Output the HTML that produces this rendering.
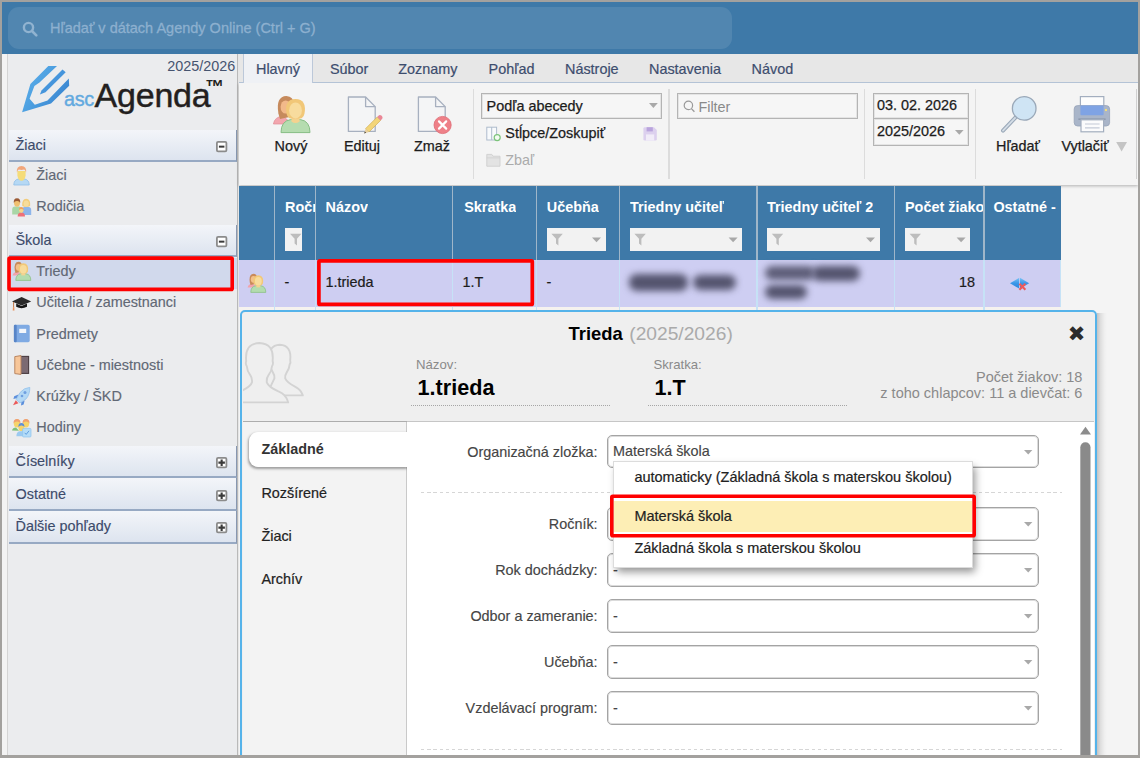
<!DOCTYPE html>
<html lang="sk">
<head>
<meta charset="utf-8">
<title>ascAgenda - Triedy</title>
<style>
html,body{margin:0;padding:0;}
body{width:1140px;height:758px;overflow:hidden;background:#f4f4f4;font-family:"Liberation Sans",Arial,sans-serif;font-size:14.4px;color:#222;position:relative;}
.abs{position:absolute;}
.t{position:absolute;white-space:nowrap;line-height:20px;height:20px;}
svg{position:absolute;overflow:visible;}
/* outer frame */
.fr{position:absolute;background:#a3a19e;z-index:50;}
/* top bar */
#topbar{position:absolute;left:0;top:0;width:1140px;height:53.5px;background:#3e79a8;}
#pill{position:absolute;left:8px;top:7px;width:724px;height:42px;border-radius:11px;background:#5186b0;}
#pill .t{left:42px;top:11.3px;color:#8db0cf;font-size:14.5px;-webkit-text-stroke:0.3px #8db0cf;}
/* sidebar */
#sidegap{position:absolute;left:0;top:53.5px;width:8px;height:710px;background:#f3f3f3;border-right:1px solid #d4d4d4;box-sizing:border-box;}
#sidebar{position:absolute;left:8px;top:53.5px;width:229px;height:710px;background:#ebecee;}
#sideedge{position:absolute;left:237px;top:53.5px;width:2px;height:710px;background:linear-gradient(90deg,#b9b9b9 0,#b9b9b9 50%,#e6e6e6 50%);}
.sh{position:absolute;left:9px;width:227px;height:30.7px;background:linear-gradient(#f3f5f9,#dde4ef);border-bottom:2px solid #97a9c3;border-right:1px solid #8797b1;}
.sh .t{left:6.5px;top:5.5px;color:#3d4b6b;-webkit-text-stroke:0.15px #3d4b6b;}
.sh .box{position:absolute;left:206.6px;top:11.5px;width:9.6px;height:9px;border:1.3px solid #858585;background:#fff;border-radius:1.5px;box-shadow:0 0 0 0.6px rgba(120,120,120,.35);}
.sh .box:before{content:"";position:absolute;left:2px;right:2px;top:3.6px;height:1.9px;background:#484848;}
.sh .box.plus:after{content:"";position:absolute;top:1.6px;bottom:1.6px;left:3.9px;width:1.9px;background:#484848;}
.si{position:absolute;left:8px;width:229px;height:31px;}
.si .t{left:28.3px;top:2.8px;color:#616875;-webkit-text-stroke:0.15px #616875;}
.si.sel{background:#d1d9ec;}
</style>
</head>
<body>
<div id="topbar">
  <div id="pill">
    <svg style="left:14px;top:14px" width="16" height="16" viewBox="0 0 16 16"><circle cx="6.5" cy="6.5" r="4.6" fill="none" stroke="#91b3d0" stroke-width="2.4"/><path d="M10 10 L14.3 14.3" stroke="#91b3d0" stroke-width="2.6" stroke-linecap="round"/></svg>
    <div class="t">Hľadať v dátach Agendy Online (Ctrl + G)</div>
  </div>
</div>
<div id="sidegap"></div>
<div id="sidebar"></div>
<div id="sideedge"></div>
<!--SIDEBAR-->
<!-- logo -->
<div class="t" style="left:160px;top:55.6px;width:75.2px;text-align:right;color:#46546f;">2025/2026</div>
<svg style="left:0;top:0" width="120" height="120" viewBox="0 0 120 120">
  <defs><linearGradient id="lg1" x1="0" y1="0" x2="1" y2="0.6"><stop offset="0" stop-color="#5fb2ec"/><stop offset="0.45" stop-color="#4fa2e2"/><stop offset="1" stop-color="#3985d0"/></linearGradient></defs>
  <path d="M22.1 112.2 L30.4 84.1 L48.3 65.9 L57 65.9 L39.5 82.5 L34.4 86.1 L29.6 98.8 L34.8 104.7 L47.5 100.4 L68.8 78.6 L69.2 85.7 L51 103.5 Z" fill="url(#lg1)"/>
  <path d="M62.5 69.5 L65.7 72.3 L45.5 92.2 L39.9 94.4 L41.5 90.5 Z" fill="#4595dc"/>
</svg>
<div class="t" style="left:64px;top:83.6px;font-size:19.8px;color:#62a9df;line-height:30px;height:30px;letter-spacing:-0.35px;-webkit-text-stroke:0.4px #62a9df">asc</div>
<div class="t" style="left:94.5px;top:72.7px;font-size:34px;color:#231f20;line-height:44px;height:44px;letter-spacing:-0.2px;-webkit-text-stroke:0.45px #231f20">Agenda</div>
<div class="t" id="tm" style="left:205.3px;top:76.6px;font-size:18.8px;font-weight:bold;color:#231f20;line-height:20px;height:20px;">™</div>

<div class="sh" style="top:129.8px"><div class="t">Žiaci</div><svg style="left:206.5px;top:11.5px" width="12" height="12" viewBox="0 0 12 12"><rect x="0.9" y="0.9" width="9.5" height="9.5" rx="1.2" fill="#fff" stroke="#8b8b8b" stroke-width="1.8"/><path d="M2.9 5.65 L8.4 5.65" stroke="#3a3a3a" stroke-width="2"/></svg></div>
<div class="si" style="top:162.4px"><div class="t">Žiaci</div></div>
<div class="si" style="top:193.6px"><div class="t">Rodičia</div></div>
<div class="sh" style="top:224.8px"><div class="t">Škola</div><svg style="left:206.5px;top:11.5px" width="12" height="12" viewBox="0 0 12 12"><rect x="0.9" y="0.9" width="9.5" height="9.5" rx="1.2" fill="#fff" stroke="#8b8b8b" stroke-width="1.8"/><path d="M2.9 5.65 L8.4 5.65" stroke="#3a3a3a" stroke-width="2"/></svg></div>
<div class="si sel" style="top:258.4px"><div class="t">Triedy</div></div>
<div class="si" style="top:289.6px"><div class="t">Učitelia / zamestnanci</div></div>
<div class="si" style="top:320.8px"><div class="t">Predmety</div></div>
<div class="si" style="top:352px"><div class="t">Učebne - miestnosti</div></div>
<div class="si" style="top:383.2px"><div class="t">Krúžky / ŠKD</div></div>
<div class="si" style="top:414.4px"><div class="t">Hodiny</div></div>
<div class="sh" style="top:445.5px"><div class="t">Číselníky</div><svg style="left:206.5px;top:11.5px" width="12" height="12" viewBox="0 0 12 12"><rect x="0.9" y="0.9" width="9.5" height="9.5" rx="1.2" fill="#fff" stroke="#8b8b8b" stroke-width="1.8"/><path d="M2.4 5.65 L8.9 5.65 M5.65 2.4 L5.65 8.9" stroke="#3a3a3a" stroke-width="2.1"/></svg></div>
<div class="sh" style="top:478.2px"><div class="t">Ostatné</div><svg style="left:206.5px;top:11.5px" width="12" height="12" viewBox="0 0 12 12"><rect x="0.9" y="0.9" width="9.5" height="9.5" rx="1.2" fill="#fff" stroke="#8b8b8b" stroke-width="1.8"/><path d="M2.4 5.65 L8.9 5.65 M5.65 2.4 L5.65 8.9" stroke="#3a3a3a" stroke-width="2.1"/></svg></div>
<div class="sh" style="top:510.9px"><div class="t">Ďalšie pohľady</div><svg style="left:206.5px;top:11.5px" width="12" height="12" viewBox="0 0 12 12"><rect x="0.9" y="0.9" width="9.5" height="9.5" rx="1.2" fill="#fff" stroke="#8b8b8b" stroke-width="1.8"/><path d="M2.4 5.65 L8.9 5.65 M5.65 2.4 L5.65 8.9" stroke="#3a3a3a" stroke-width="2.1"/></svg></div>
<svg style="left:0;top:0;z-index:20" width="1140" height="758"><rect x="9" y="258.1" width="223.2" height="31.3" rx="1" fill="none" stroke="#ff0000" stroke-width="3.6"/></svg>
<svg style="left:0;top:0;z-index:5" width="240" height="450" viewBox="0 0 240 450">
  <!-- Ziaci person -->
  <g>
    <path d="M13.8 185 Q13.8 180 18.2 179 L24.8 179 Q29.2 180 29.2 185 Z" fill="#b5d8f4" stroke="#8fbfe8" stroke-width="0.8"/>
    <path d="M17.4 171 L17.4 175.4 Q18.2 180.6 21.5 180.8 Q24.8 180.6 25.6 175.4 L25.6 171 Z" fill="#f5dc78"/>
    <path d="M16.9 172.6 Q16.2 166 21.5 165.9 Q26.8 166 26.1 172.6 Q25.4 170 24.2 169.6 Q21.5 170.3 18.8 169.6 Q17.6 170 16.9 172.6 Z" fill="#f2a67a"/>
  </g>
  <!-- Rodicia family -->
  <g>
    <path d="M12.2 214.5 L12.2 209.5 Q12.2 206.8 15 206.6 L19.2 206.6 Q21.6 206.8 21.6 209.5 L21.6 214.5 Z" fill="#a9d6a6"/>
    <ellipse cx="17" cy="203" rx="3" ry="3.7" fill="#f0c070"/>
    <path d="M13.8 203 Q13.3 198.3 17 198.2 Q20.7 198.3 20.2 203 Q19.5 200.8 17 200.9 Q14.5 200.8 13.8 203Z" fill="#9a5a34"/>
    <path d="M22 215 L22 210 Q22 207.3 24.6 207 L28.6 207 Q31.2 207.3 31.2 210 L31.2 215 Z" fill="#8db5ea"/>
    <path d="M22.3 206 Q21.6 199 26.2 198.8 Q30.8 199 30.1 206 Q28.5 207 26.2 207 Q23.9 207 22.3 206Z" fill="#f2cc7c"/>
    <ellipse cx="26.2" cy="203.6" rx="2.6" ry="3.2" fill="#f7dc9a"/>
    <path d="M17.6 216.6 Q17.6 212.6 21.3 212.6 Q25 212.6 25 216.6 Z" fill="#ee6f78"/>
    <ellipse cx="21.3" cy="210.2" rx="2.2" ry="2.6" fill="#f5d58a"/>
    <path d="M19 210 Q18.8 207.2 21.3 207.1 Q23.8 207.2 23.6 210 Q22.5 208.8 21.3 208.9 Q20.1 208.8 19 210Z" fill="#f0a060"/>
  </g>
  <!-- Triedy two persons -->
  <g>
    <path d="M12.6 275.5 Q13.4 272 17.6 271.6 L22 275.5 Z" fill="#f2a3ac"/>
    <path d="M14.8 270.5 Q13.6 262 18.6 261.8 Q22 262 22 266 L20 272 L15.6 273 Z" fill="#c98a5a"/>
    <ellipse cx="18.4" cy="267.3" rx="2.6" ry="3.4" fill="#f3c08a"/>
    <path d="M15.8 280.4 Q15.8 274.6 20.6 273.8 L26 273.8 Q30.8 274.6 30.8 280.4 Z" fill="#b3dcae" stroke="#8cc088" stroke-width="0.8"/>
    <rect x="21.3" y="271" width="4" height="4.4" fill="#f4d391"/>
    <path d="M18.7 271.5 Q17.3 263.4 23.3 263.2 Q29.3 263.4 27.9 271.5 Q27 273.4 25.5 273.4 L21.1 273.4 Q19.6 273.4 18.7 271.5Z" fill="#f2c878"/>
    <ellipse cx="23.3" cy="269.2" rx="3.4" ry="4.2" fill="#f8dc9c"/>
  </g>
  <!-- Ucitelia cap -->
  <g>
    <path d="M12 301.4 L21.6 297 L31.2 301.4 L21.6 305.6 Z" fill="#2a2a2a"/>
    <path d="M16.2 303.6 L16.2 306.8 Q21.6 309.6 27 306.8 L27 303.6 L21.6 306 Z" fill="#161616"/>
    <path d="M13.6 302 L13.6 307.6" stroke="#c07848" stroke-width="1"/>
    <path d="M12.9 307.2 L14.3 307.2 L14.5 310.4 L12.7 310.4 Z" fill="#e8905a"/>
  </g>
  <!-- Predmety book -->
  <g>
    <rect x="13.9" y="324.8" width="15.8" height="17.4" rx="1.6" fill="#7faae3"/>
    <rect x="13.9" y="324.8" width="2.8" height="17.4" rx="1" fill="#5885c7"/>
    <rect x="19.2" y="328.8" width="7" height="4.2" fill="#f3f6fb"/>
  </g>
  <!-- Ucebne door -->
  <g>
    <rect x="20.6" y="356.4" width="8" height="17" fill="#7b6a72" stroke="#4a3c42" stroke-width="1.1"/>
    <path d="M14.8 356.6 L21 355.6 L21 374.4 L14.8 373.6 Z" fill="#f7c699" stroke="#b98662" stroke-width="1"/>
  </g>
  <!-- Kruzky rocket -->
  <g>
    <path d="M29.8 387.4 Q24 387.6 20 392.6 L16.2 399.4 L19.8 403 L26 399 Q30 394.4 29.8 387.4Z" fill="#b3d8f5" stroke="#8cbdeb" stroke-width="0.7"/>
    <circle cx="25" cy="392.4" r="1.5" fill="#6f9fe0"/>
    <circle cx="22" cy="396" r="1.3" fill="#6f9fe0"/>
    <path d="M18.4 394.4 L14.2 396.2 L13.4 399 L16.6 398.2Z" fill="#5b8fdc"/>
    <path d="M24.6 400.4 L23.6 404.6 L21 405.4 L21.4 402.2Z" fill="#5b8fdc"/>
    <path d="M15.8 400.2 L13 405.2 L18.4 403.2Z" fill="#ea5a5a"/>
  </g>
  <!-- Hodiny -->
  <g>
    <path d="M12 430.6 Q12.6 427.8 16 427.6 L19 430.8 Z" fill="#7fc07a"/>
    <ellipse cx="17" cy="423.6" rx="3.2" ry="4" fill="#f6d46a"/>
    <path d="M13.6 423.4 Q13.2 419 17 418.9 Q20.8 419 20.4 423.4 Q19.4 421.4 17 421.5 Q14.6 421.4 13.6 423.4Z" fill="#f0a070"/>
    <ellipse cx="26" cy="423.6" rx="3.2" ry="4" fill="#f6d46a"/>
    <path d="M22.6 423.4 Q22.2 419 26 418.9 Q29.8 419 29.4 423.4 Q28.4 421.4 26 421.5 Q23.6 421.4 22.6 423.4Z" fill="#f0a070"/>
    <ellipse cx="21.4" cy="427.6" rx="3" ry="3.6" fill="#f6d46a"/>
    <path d="M18.4 427 Q18.2 423.2 21.4 423.1 Q24.6 423.2 24.4 427 Q23.4 425.4 21.4 425.5 Q19.4 425.4 18.4 427Z" fill="#5f8fd6"/>
    <path d="M16.4 436.2 Q16.4 431.6 19.6 431.2 L23 431.2 L23 436.2Z" fill="#9ccaf0"/>
    <rect x="22.6" y="428.4" width="8.4" height="8.6" rx="1" fill="#b5dcf7" stroke="#8ec4ee" stroke-width="0.7"/>
    <path d="M24.6 432.8 L26.2 434.4 L29 430.8" fill="none" stroke="#5f9fe0" stroke-width="1"/>
  </g>
</svg>
<!--/SIDEBAR-->
<!--MAIN-->
<style>
#tabs{position:absolute;left:239px;top:53.5px;width:899px;height:29px;background:#e7e7e7;border-bottom:1.4px solid #b4c3d6;box-sizing:border-box;}
#tabs .t{top:6.3px;color:#3d4d6e;}
#tabact{position:absolute;left:243px;top:53.5px;width:70px;height:29.6px;background:#eff1f5;border:1px solid #bcc8d9;border-bottom:none;border-top:none;box-sizing:border-box;}
#toolbar{position:absolute;left:239px;top:82.6px;width:899px;height:102.6px;background:#f4f4f4;box-shadow:0 1px 3px rgba(0,0,0,.28);}
.vsep{position:absolute;top:89px;width:1.3px;height:90px;background:#dcdcdc;}
.tl{position:absolute;white-space:nowrap;line-height:20px;height:20px;top:136.4px;color:#1c1c1c;text-align:center;-webkit-text-stroke:0.25px #1c1c1c;}
.tbox{position:absolute;border:1px solid #b4b4b4;background:#f6f6f6;box-sizing:border-box;box-shadow:inset 0 0 0 1px rgba(0,0,0,.07);}
</style>
<div id="toolbar"></div>
<div id="tabs">
</div>
<div id="tabact"></div>
<div class="t" style="left:256px;top:59.4px;color:#3d4d6e;-webkit-text-stroke:0.2px #3d4d6e">Hlavný</div>
<div class="t" style="left:330px;top:59.4px;color:#3d4d6e;-webkit-text-stroke:0.2px #3d4d6e">Súbor</div>
<div class="t" style="left:398.3px;top:59.4px;color:#3d4d6e;-webkit-text-stroke:0.2px #3d4d6e">Zoznamy</div>
<div class="t" style="left:488.6px;top:59.4px;color:#3d4d6e;-webkit-text-stroke:0.2px #3d4d6e">Pohľad</div>
<div class="t" style="left:565px;top:59.4px;color:#3d4d6e;-webkit-text-stroke:0.2px #3d4d6e">Nástroje</div>
<div class="t" style="left:649px;top:59.4px;color:#3d4d6e;-webkit-text-stroke:0.2px #3d4d6e">Nastavenia</div>
<div class="t" style="left:751.6px;top:59.4px;color:#3d4d6e;-webkit-text-stroke:0.2px #3d4d6e">Návod</div>

<div class="vsep" style="left:472.6px"></div>
<div class="vsep" style="left:668.4px"></div>
<div class="vsep" style="left:863.6px"></div>
<div class="vsep" style="left:974.6px"></div>
<div class="vsep" style="left:1135.6px;background:#d0d0d0"></div>

<div class="tl" style="left:261px;width:60px">Nový</div>
<div class="tl" style="left:332px;width:60px">Edituj</div>
<div class="tl" style="left:402px;width:60px">Zmaž</div>
<div class="tl" style="left:988px;width:60px">Hľadať</div>
<div class="tl" style="left:1055px;width:60px">Vytlačiť</div>
<svg style="left:1115.6px;top:141.8px" width="12" height="10" viewBox="0 0 12 10"><path d="M0.2 0 L11 0 L5.6 9.4 Z" fill="#c4c4c4"/></svg>

<div class="tbox" style="left:481px;top:92.8px;width:181.4px;height:26.2px"></div>
<div class="t" style="left:486.6px;top:95.6px;color:#1c1c1c;-webkit-text-stroke:0.25px #1c1c1c">Podľa abecedy</div>
<svg style="left:648.6px;top:103.4px" width="9" height="5" viewBox="0 0 9 5"><path d="M0 0 L8.8 0 L4.4 4.9 Z" fill="#a9a9a9"/></svg>
<div class="t" style="left:505.3px;top:123.4px;color:#1c1c1c;-webkit-text-stroke:0.25px #1c1c1c">Stĺpce/Zoskupiť</div>
<div class="t" style="left:505.3px;top:150px;color:#ababab">Zbaľ</div>

<div class="tbox" style="left:677px;top:92.8px;width:181.4px;height:26.2px"></div>
<svg style="left:683.2px;top:99.8px" width="13" height="13" viewBox="0 0 13 13"><circle cx="5.4" cy="5.4" r="4.2" fill="none" stroke="#9a9a9a" stroke-width="1.2"/><path d="M8.4 8.6 L11.4 11.8" stroke="#9a9a9a" stroke-width="1.3"/></svg>
<div class="t" style="left:698.4px;top:96.6px;color:#8a8a8a">Filter</div>

<div class="tbox" style="left:872.6px;top:92.8px;width:96.6px;height:26.4px"></div>
<div class="tbox" style="left:872.6px;top:118px;width:96.6px;height:27.8px"></div>
<div class="t" style="left:877px;top:95px;color:#1c1c1c;-webkit-text-stroke:0.25px #1c1c1c">03. 02. 2026</div>
<div class="t" style="left:877px;top:120.6px;color:#1c1c1c;-webkit-text-stroke:0.25px #1c1c1c">2025/2026</div>
<svg style="left:955px;top:129.6px" width="9" height="5" viewBox="0 0 9 5"><path d="M0 0 L8.6 0 L4.3 4.8 Z" fill="#a9a9a9"/></svg>
<svg style="left:0;top:0;z-index:6" width="1140" height="190" viewBox="0 0 1140 190">
  <!-- Novy: two people -->
  <g>
    <path d="M273.4 124 Q274.6 116.8 283 116 L292 124 Z" fill="#f3a6ae" stroke="#e08c96" stroke-width="0.7"/>
    <path d="M278.4 113.5 Q275.6 96.4 286.4 96 Q293.6 96.4 293.6 104 L289.6 117 L280 119 Z" fill="#c68a5c"/>
    <ellipse cx="285.6" cy="107" rx="5" ry="6.6" fill="#f2b98a"/>
    <path d="M281 132.6 Q281 121 290.6 119.6 L300.4 119.6 Q310 121 310 132.6 Z" fill="#b5dcb0" stroke="#86bd84" stroke-width="1"/>
    <path d="M291.4 113 L291.4 121.4 Q295.5 124.6 299.6 121.4 L299.6 113 Z" fill="#f4d28f"/>
    <path d="M286.6 114 Q283.8 99.4 295.5 99 Q307.2 99.4 304.4 114 Q303 118.4 300.2 118.6 L290.8 118.6 Q288 118.4 286.6 114Z" fill="#f1c778"/>
    <ellipse cx="295.5" cy="110.4" rx="6.4" ry="8" fill="#f8dc9e"/>
  </g>
  <!-- Edituj: doc + pencil -->
  <g>
    <path d="M348.4 97 L365.6 97 L375.2 106.6 L375.2 131.4 L348.4 131.4 Z" fill="#f4f5f6" stroke="#a7b0bf" stroke-width="1.3" stroke-linejoin="round"/>
    <path d="M365.6 97 L365.6 106.6 L375.2 106.6" fill="none" stroke="#a7b0bf" stroke-width="1.3" stroke-linejoin="round"/>
    <path d="M365.6 128.6 L377.2 117 L380.6 120.4 L369 132 Z" fill="#f3d578" stroke="#c9a84e" stroke-width="0.6"/>
    <path d="M377.2 117 L379 115.2 Q380.2 114.4 381.4 115.6 L382.2 116.6 Q383 117.8 382.2 118.8 L380.6 120.4 Z" fill="#ea8796"/>
    <path d="M365.6 128.6 L364.2 133.4 L369 132 Z" fill="#e8d0a0"/>
    <path d="M364.8 131.4 L364.2 133.4 L366.2 132.8 Z" fill="#444"/>
  </g>
  <!-- Zmaz: doc + red x -->
  <g>
    <path d="M418.4 97 L435.6 97 L445.2 106.6 L445.2 131.4 L418.4 131.4 Z" fill="#f4f5f6" stroke="#a7b0bf" stroke-width="1.3" stroke-linejoin="round"/>
    <path d="M435.6 97 L435.6 106.6 L445.2 106.6" fill="none" stroke="#a7b0bf" stroke-width="1.3" stroke-linejoin="round"/>
    <circle cx="442.6" cy="125" r="8.6" fill="#ee8088" stroke="#de6a74" stroke-width="0.8"/>
    <path d="M439 121.4 L446.2 128.6 M446.2 121.4 L439 128.6" stroke="#fff" stroke-width="2.2" stroke-linecap="round"/>
  </g>
  <!-- columns icon -->
  <g>
    <rect x="486.8" y="127.2" width="9.8" height="12.8" fill="#f8fafc" stroke="#aebccc" stroke-width="1"/>
    <path d="M491.7 127.2 L491.7 140" stroke="#aebccc" stroke-width="1"/>
    <circle cx="497.2" cy="137.6" r="3" fill="#f4fbf2" stroke="#7cc47a" stroke-width="1.2"/>
  </g>
  <!-- save icon -->
  <g>
    <path d="M643.4 128.6 Q643.4 127.2 644.8 127.2 L654 127.2 L656.8 130 L656.8 139.2 Q656.8 140.6 655.4 140.6 L644.8 140.6 Q643.4 140.6 643.4 139.2 Z" fill="#dcd0ee"/>
    <rect x="646.6" y="127.2" width="6.2" height="4.2" fill="#b9a4dc"/>
    <rect x="646" y="134.4" width="8.2" height="6.2" fill="#f1ecf8"/>
  </g>
  <!-- folder icon -->
  <g>
    <path d="M486.8 154.4 L491.8 154.4 L493 156.2 L500 156.2 L500 166.2 L486.8 166.2 Z" fill="#e3e3e3" stroke="#cfcfcf" stroke-width="0.9"/>
    <path d="M486.8 157.8 L500 157.8" stroke="#d0d0d0" stroke-width="0.8"/>
  </g>
  <!-- Hladat magnifier -->
  <g>
    <path d="M1015.6 117.4 L1003 130.6" stroke="#9aa8b8" stroke-width="4" stroke-linecap="round"/>
    <path d="M1015.6 117.4 L1003 130.6" stroke="#d4dde6" stroke-width="1.8" stroke-linecap="round"/>
    <circle cx="1024.2" cy="108.4" r="11.8" fill="#cfe4f4" stroke="#9aa8b8" stroke-width="1.3"/>
  </g>
  <!-- printer -->
  <g>
    <rect x="1080.4" y="96.6" width="23.4" height="11" fill="#fdfdfd" stroke="#a3aebf" stroke-width="1.2"/>
    <rect x="1074.2" y="105.6" width="35.4" height="20.4" rx="3.4" fill="#a9b5c9" stroke="#95a2b8" stroke-width="0.8"/>
    <rect x="1080.4" y="105.6" width="23.2" height="9.6" rx="1" fill="#7fa3e4"/>
    <rect x="1105" y="109" width="2" height="2" fill="#f3df7a"/>
    <path d="M1078.4 119.2 L1105.6 119.2" stroke="#8d99ae" stroke-width="1.6"/>
    <rect x="1081" y="119.8" width="22.6" height="12" fill="#fbfbfc" stroke="#a3aebf" stroke-width="1.2"/>
    <path d="M1085 124 L1099.6 124 M1085 127.8 L1099.6 127.8" stroke="#c3cad6" stroke-width="1.2"/>
  </g>
</svg>
<!--/MAIN-->
<!--GRID-->
<style>
#ghead{position:absolute;left:239px;top:186px;width:822px;height:73.8px;background:#3e79a8;}
#grow{position:absolute;left:239px;top:259.8px;width:822px;height:47.2px;background:#cecef2;}
#gbelow{position:absolute;left:239px;top:307px;width:822px;height:5px;background:#f5f2ef;}
.cs{position:absolute;top:186px;width:1.5px;height:73.8px;background:#9fb6c9;}
.cr{position:absolute;top:259.8px;width:1.5px;height:52px;background:#c6e2f6;}
.gh{position:absolute;white-space:nowrap;line-height:20px;height:20px;top:197px;color:#fff;font-weight:bold;overflow:hidden;}
.gc{position:absolute;white-space:nowrap;line-height:20px;height:20px;top:272.4px;color:#1c1c1c;-webkit-text-stroke:0.2px #1c1c1c;}
.fb{position:absolute;top:227.8px;height:23.6px;background:#f2f2f2;}
.blur{position:absolute;background:#54546e;border-radius:8px;filter:blur(3.8px);}
</style>
<div id="ghead"></div>
<div id="grow"></div>
<div id="gbelow"></div>
<div class="cs" style="left:273.6px"></div><div class="cr" style="left:273.6px"></div>
<div class="cs" style="left:314.8px"></div><div class="cr" style="left:314.8px"></div>
<div class="cs" style="left:451.6px"></div><div class="cr" style="left:451.6px"></div>
<div class="cs" style="left:535.6px"></div><div class="cr" style="left:535.6px"></div>
<div class="cs" style="left:618.8px"></div><div class="cr" style="left:618.8px"></div>
<div class="cs" style="left:756px"></div><div class="cr" style="left:756px"></div>
<div class="cs" style="left:893.8px"></div><div class="cr" style="left:893.8px"></div>
<div class="cs" style="left:983px"></div><div class="cr" style="left:983px"></div>
<div class="cr" style="left:1059.6px;height:47.2px"></div>

<div class="gh" style="left:285px;width:29.8px">Ročník</div>
<div class="gh" style="left:325.6px">Názov</div>
<div class="gh" style="left:464.2px">Skratka</div>
<div class="gh" style="left:546.8px">Učebňa</div>
<div class="gh" style="left:630px">Triedny učiteľ</div>
<div class="gh" style="left:767px">Triedny učiteľ 2</div>
<div class="gh" style="left:905px;width:78px">Počet žiakov</div>
<div class="gh" style="left:993.4px">Ostatné -</div>

<div class="fb" style="left:284.8px;width:16.8px"></div>
<div class="fb" style="left:546.6px;width:59px"></div>
<div class="fb" style="left:629.6px;width:112.6px"></div>
<div class="fb" style="left:767px;width:112.6px"></div>
<div class="fb" style="left:904.8px;width:65px"></div>
<svg style="left:0;top:0;z-index:7" width="1140" height="320" viewBox="0 0 1140 320">
  <path d="M290.0 233.8 L301.4 233.8 L297.0 238.8 L297.0 245.4 L294.6 243.4 L294.6 238.8 Z" fill="#bdbdbd"/>
  <path d="M551.4 233.8 L562.8 233.8 L558.4 238.8 L558.4 245.4 L556.0 243.4 L556.0 238.8 Z" fill="#bdbdbd"/><path d="M592.0 237.5 L601.0 237.5 L596.5 242.3 Z" fill="#a8a8a8"/>
  <path d="M634.4 233.8 L645.8 233.8 L641.4 238.8 L641.4 245.4 L639.0 243.4 L639.0 238.8 Z" fill="#bdbdbd"/><path d="M728.6 237.5 L737.6 237.5 L733.1 242.3 Z" fill="#a8a8a8"/>
  <path d="M771.8 233.8 L783.2 233.8 L778.8 238.8 L778.8 245.4 L776.4 243.4 L776.4 238.8 Z" fill="#bdbdbd"/><path d="M866.0 237.5 L875.0 237.5 L870.5 242.3 Z" fill="#a8a8a8"/>
  <path d="M909.6 233.8 L921.0 233.8 L916.6 238.8 L916.6 245.4 L914.2 243.4 L914.2 238.8 Z" fill="#bdbdbd"/><path d="M956.6 237.5 L965.6 237.5 L961.1 242.3 Z" fill="#a8a8a8"/>
  <!-- row icon: two persons small -->
  <g>
    <path d="M247.6 287.5 Q248.4 284 252.6 283.6 L257 287.5 Z" fill="#f2a3ac"/>
    <path d="M249.8 282.5 Q248.6 274 253.6 273.8 Q257 274 257 278 L255 284 L250.6 285 Z" fill="#c98a5a"/>
    <ellipse cx="253.4" cy="279.3" rx="2.6" ry="3.4" fill="#f3c08a"/>
    <path d="M250.8 292.4 Q250.8 286.6 255.6 285.8 L261 285.8 Q265.8 286.6 265.8 292.4 Z" fill="#b3dcae" stroke="#8cc088" stroke-width="0.8"/>
    <rect x="256.3" y="283" width="4" height="4.4" fill="#f4d391"/>
    <path d="M253.7 283.5 Q252.3 275.4 258.3 275.2 Q264.3 275.4 262.9 283.5 Q262 285.4 260.5 285.4 L256.1 285.4 Q254.6 285.4 253.7 283.5Z" fill="#f2c878"/>
    <ellipse cx="258.3" cy="281.2" rx="3.4" ry="4.2" fill="#f8dc9c"/>
  </g>
  <!-- arrows with x -->
  <g>
    <defs><linearGradient id="ag" x1="0" y1="0" x2="0" y2="1"><stop offset="0" stop-color="#7cc4f6"/><stop offset="0.5" stop-color="#3a97e8"/><stop offset="1" stop-color="#2f86dc"/></linearGradient></defs>
    <path d="M1010 283.2 L1019.2 277.8 L1019.2 288.6 Z" fill="url(#ag)"/>
    <path d="M1029.2 283.2 L1020 277.8 L1020 288.6 Z" fill="url(#ag)"/>
    <path d="M1019.4 283.8 L1025.4 289.8 M1025.4 283.8 L1019.4 289.8" stroke="#ee5a5a" stroke-width="2.1"/>
  </g>
  <rect x="318.9" y="260.8" width="213.4" height="43.6" rx="1" fill="none" stroke="#ff0000" stroke-width="3.7"/>
</svg>
<div class="gc" style="left:284.4px">-</div>
<div class="gc" style="left:325.4px">1.trieda</div>
<div class="gc" style="left:462.4px">1.T</div>
<div class="gc" style="left:546.4px">-</div>
<div class="gc" style="left:935px;width:40px;text-align:right">18</div>
<div class="blur" style="left:629px;top:274px;width:59px;height:16.6px"></div>
<div class="blur" style="left:693px;top:274.6px;width:43px;height:15.4px"></div>
<div class="blur" style="left:765px;top:266.4px;width:50px;height:13.6px;background:#5e5e78"></div>
<div class="blur" style="left:812px;top:265.6px;width:48px;height:15px"></div>
<div class="blur" style="left:765px;top:285px;width:42px;height:14.4px"></div>
<!--/GRID-->
<!--DIALOG-->
<style>
#dlg{position:absolute;left:240.4px;top:310px;width:1856.2px;height:460px;width:856.2px;box-sizing:border-box;border:2.2px solid #55b3ea;border-radius:5px;background:#efefef;z-index:10;}
#dshadow{position:absolute;left:1096.6px;top:313px;width:10px;height:450px;background:linear-gradient(90deg,rgba(0,0,0,.2),rgba(0,0,0,.09) 35%,rgba(0,0,0,.02) 75%,rgba(0,0,0,0));z-index:9;}
#dhline{position:absolute;left:242.6px;top:420.6px;width:851.6px;height:1.3px;background:linear-gradient(90deg,#adadad 0,#adadad 164px,#c6c6c6 164px);z-index:11;}
#dnav{position:absolute;left:242.6px;top:421.9px;width:163px;height:340px;background:#f3f3f3;border-right:1.3px solid #c9c9c9;z-index:11;}
#dbody{position:absolute;left:406.9px;top:421.9px;width:687.3px;height:340px;background:#fff;z-index:11;}
#dact{position:absolute;left:248.6px;top:431.6px;width:159.6px;height:35.6px;background:#fff;border-radius:9px 0 0 9px;box-shadow:-1px 1.5px 2.5px rgba(0,0,0,.35);z-index:11;}
.d{position:absolute;white-space:nowrap;line-height:20px;height:20px;z-index:13;}
.lab{position:absolute;white-space:nowrap;line-height:20px;height:20px;z-index:13;left:440px;width:157.6px;text-align:right;color:#454545;-webkit-text-stroke:0.15px #454545;}
.sbx{position:absolute;left:606.6px;width:432.2px;height:33.4px;box-sizing:border-box;border:1px solid #a4a4a4;border-radius:5px;background:#fff;box-shadow:inset 0 0 0 1px rgba(0,0,0,.14);z-index:12;}
.sbx .d{left:5.4px;top:5.4px;color:#454545;-webkit-text-stroke:0.15px #454545;}
.sbx svg{left:416.4px;top:13.6px;}
.dash{position:absolute;left:420.6px;width:641.4px;height:1.2px;z-index:12;background:repeating-linear-gradient(90deg,#d6d6d6 0,#d6d6d6 3.4px,transparent 3.4px,transparent 6.2px);}
.dots{position:absolute;height:1px;z-index:12;background:repeating-linear-gradient(90deg,#a6a6a6 0,#a6a6a6 1px,transparent 1px,transparent 2px);}
#ddl{position:absolute;left:613px;top:461px;width:359.6px;height:106.6px;background:#fff;border:1px solid #dcdcdc;box-sizing:border-box;box-shadow:3px 5px 8px -1px rgba(0,0,0,.42);z-index:20;}
#ddh{position:absolute;left:614px;top:501px;width:357.6px;height:31.2px;background:#fdeeb5;z-index:21;}
.di{position:absolute;white-space:nowrap;line-height:20px;height:20px;z-index:22;left:634.4px;color:#222;font-size:14.5px;-webkit-text-stroke:0.2px #222;}
</style>
<div id="dlg"></div>
<div id="dshadow"></div>
<div id="dhline"></div>
<div id="dnav"></div>
<div id="dact"></div>
<div id="dbody"></div>
<svg style="left:242.6px;top:312px;z-index:12;overflow:hidden" width="70" height="100" viewBox="242.6 312 70 100">
  <g fill="#efefef" stroke="#d3d3d3" stroke-width="1.9" stroke-linejoin="round">
    <path d="M266 395.4 L302.4 395.4 Q300.6 389.6 295 386.8 Q286.6 382.6 284.8 378.4 Q284.6 374.8 286.2 372.6 Q289 368.6 289.2 364.6 Q290.6 362.6 289.8 360.2 Q291.4 345.4 279.4 344.8 Q267.4 345.4 269 360.2 Q268.2 362.6 269.6 364.6 Q269.8 368.6 272.6 372.6 Q274.2 374.8 274 378.4 Z"/>
    <path d="M236 402.4 L287.8 402.4 Q286 394.6 278 391.4 Q268 387 266.4 382.4 Q266 378 268 375.4 Q271.4 370.8 271.6 366.2 Q273.2 364 272.2 361 Q274 343.6 259 343 Q244 343.6 245.8 361 Q244.8 364 246.4 366.2 Q246.6 370.8 250 375.4 Q252 378 251.6 382.4 Q250 387 240 391.4 Z"/>
  </g>
</svg>
<div class="d" style="left:568.6px;top:322px;font-size:18.4px;font-weight:bold;color:#000;line-height:24px;height:24px">Trieda</div>
<div class="d" style="left:629.3px;top:322px;font-size:19.2px;color:#aaa;line-height:24px;height:24px">(2025/2026)</div>
<div class="d" style="left:1067.8px;top:321.8px;font-size:21px;line-height:24px;height:24px;color:#2c2c2c;font-family:'DejaVu Sans','Liberation Sans',sans-serif">✖</div>
<div class="d" style="left:416px;top:354.6px;font-size:13.2px;color:#8a8a8a">Názov:</div>
<div class="d" style="left:417.6px;top:373.6px;font-size:21.6px;font-weight:bold;color:#000;line-height:28px;height:28px">1.trieda</div>
<div class="dots" style="left:411px;top:405px;width:199px"></div>
<div class="d" style="left:653.4px;top:354.6px;font-size:13.2px;color:#8a8a8a">Skratka:</div>
<div class="d" style="left:654.6px;top:373.6px;font-size:21.6px;font-weight:bold;color:#000;line-height:28px;height:28px">1.T</div>
<div class="dots" style="left:648px;top:405px;width:199px"></div>
<div class="d" style="left:842px;width:240.4px;text-align:right;top:366.8px;font-size:14.5px;color:#8a8a8a">Počet žiakov: 18</div>
<div class="d" style="left:842px;width:240.4px;text-align:right;top:383.4px;font-size:14.5px;color:#8a8a8a">z toho chlapcov: 11 a dievčat: 6</div>

<div class="d" style="left:261.4px;top:439.4px;font-weight:bold;color:#333">Základné</div>
<div class="d" style="left:261.4px;top:482.8px;color:#222;-webkit-text-stroke:0.2px #222">Rozšírené</div>
<div class="d" style="left:261.4px;top:526px;color:#222;-webkit-text-stroke:0.2px #222">Žiaci</div>
<div class="d" style="left:261.4px;top:569.4px;color:#222;-webkit-text-stroke:0.2px #222">Archív</div>

<div class="lab" style="top:441.6px">Organizačná zložka:</div>
<div class="sbx" style="top:435px"><div class="d">Materská škola</div><svg width="9" height="5" viewBox="0 0 9 5"><path d="M0 0 L8.4 0 L4.2 4.6 Z" fill="#a9a9a9"/></svg></div>
<div class="dash" style="top:492px"></div>
<div class="lab" style="top:513.6px">Ročník:</div>
<div class="sbx" style="top:507.2px"><div class="d">-</div><svg width="9" height="5" viewBox="0 0 9 5"><path d="M0 0 L8.4 0 L4.2 4.6 Z" fill="#a9a9a9"/></svg></div>
<div class="lab" style="top:559.6px">Rok dochádzky:</div>
<div class="sbx" style="top:553.2px"><div class="d">-</div><svg width="9" height="5" viewBox="0 0 9 5"><path d="M0 0 L8.4 0 L4.2 4.6 Z" fill="#a9a9a9"/></svg></div>
<div class="lab" style="top:605.6px">Odbor a zameranie:</div>
<div class="sbx" style="top:599.2px"><div class="d">-</div><svg width="9" height="5" viewBox="0 0 9 5"><path d="M0 0 L8.4 0 L4.2 4.6 Z" fill="#a9a9a9"/></svg></div>
<div class="lab" style="top:651.6px">Učebňa:</div>
<div class="sbx" style="top:645.2px"><div class="d">-</div><svg width="9" height="5" viewBox="0 0 9 5"><path d="M0 0 L8.4 0 L4.2 4.6 Z" fill="#a9a9a9"/></svg></div>
<div class="lab" style="top:697.6px">Vzdelávací program:</div>
<div class="sbx" style="top:691.2px"><div class="d">-</div><svg width="9" height="5" viewBox="0 0 9 5"><path d="M0 0 L8.4 0 L4.2 4.6 Z" fill="#a9a9a9"/></svg></div>
<div class="dash" style="top:748.6px"></div>

<svg style="left:1078px;top:424px;z-index:13" width="14" height="340" viewBox="1078 424 14 340">
  <path d="M1080 434.4 L1091 434.4 L1085.5 426.8 Z" fill="#8c8c8c"/>
  <rect x="1080.3" y="442.2" width="10.2" height="330" rx="5.1" fill="#8a8a8a"/>
</svg>

<div id="ddl"></div>
<div id="ddh"></div>
<div class="di" style="top:467.4px">automaticky (Základná škola s materskou školou)</div>
<div class="di" style="top:506.4px">Materská škola</div>
<div class="di" style="top:538px">Základná škola s materskou školou</div>
<svg style="left:0;top:0;z-index:30" width="1140" height="758"><rect x="611.8" y="496.3" width="362.4" height="39.4" rx="1" fill="none" stroke="#ff0000" stroke-width="3.6"/></svg>
<!--/DIALOG-->
<div class="fr" style="left:0;top:0;width:1140px;height:2px"></div>
<div class="fr" style="left:0;top:0;width:2px;height:758px"></div>
<div class="fr" style="left:1137.6px;top:0;width:3px;height:758px"></div>
<div class="fr" style="left:0;top:755.4px;width:1140px;height:3px"></div>
</body>
</html>
